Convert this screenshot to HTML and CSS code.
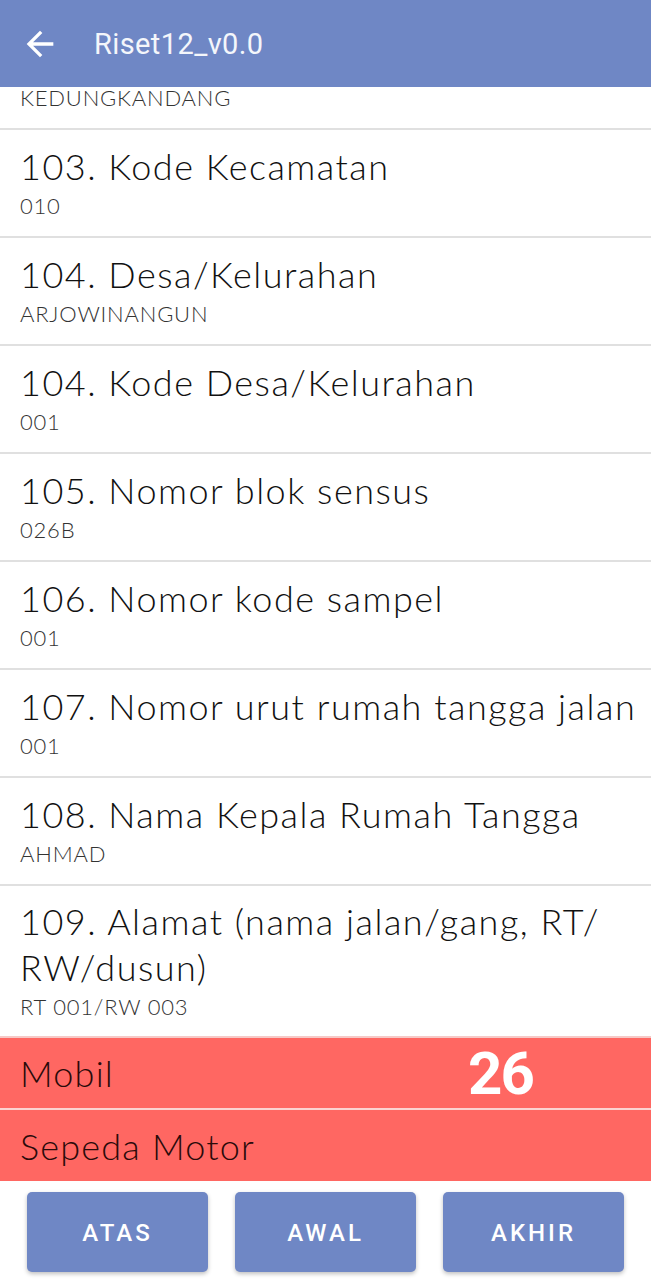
FILE: index.html
```html
<!DOCTYPE html>
<html>
<head>
<meta charset="utf-8">
<link rel="stylesheet" href="styles.css">
</head>
<body>
<div class="app">
  <header class="bar">
    <svg class="back" viewBox="0 0 24 24" width="40" height="40"><path d="M20 11H7.83l5.59-5.59L12 4l-8 8 8 8 1.41-1.41L7.83 13H20v-2z" fill="#fff"/></svg>
    <div class="title">Riset12_v0.0</div>
  </header>
  <div class="list">
    <div class="item partial"><div class="sub">KEDUNGKANDANG</div></div>
    <div class="item"><div class="q">103. Kode Kecamatan</div><div class="sub">010</div></div>
    <div class="item"><div class="q">104. Desa/Kelurahan</div><div class="sub">ARJOWINANGUN</div></div>
    <div class="item"><div class="q">104. Kode Desa/Kelurahan</div><div class="sub">001</div></div>
    <div class="item"><div class="q">105. Nomor blok sensus</div><div class="sub">026B</div></div>
    <div class="item"><div class="q">106. Nomor kode sampel</div><div class="sub">001</div></div>
    <div class="item"><div class="q">107. Nomor urut rumah tangga jalan</div><div class="sub">001</div></div>
    <div class="item"><div class="q">108. Nama Kepala Rumah Tangga</div><div class="sub">AHMAD</div></div>
    <div class="item last"><div class="q">109. Alamat (nama jalan/gang, RT/<br>RW/dusun)</div><div class="sub">RT 001/RW 003</div></div>
    <div class="red"><span>Mobil</span><span class="count">26</span></div>
    <div class="red second"><span>Sepeda Motor</span></div>
  </div>
  <footer class="nav">
    <button class="btn">ATAS</button>
    <button class="btn">AWAL</button>
    <button class="btn">AKHIR</button>
  </footer>
</div>
</body>
</html>
```
FILE: styles.css
```css
* { box-sizing: border-box; }
html, body { margin: 0; padding: 0; background: #fff; }
.app { width: 651px; height: 1280px; display: flex; flex-direction: column; overflow: hidden; font-family: "Lato", "Roboto", sans-serif; }
.bar { height: 87px; background: #6f87c5; display: flex; align-items: center; padding-left: 20px; flex-shrink: 0; }
.back { display: block; }
.title { font-family: "Roboto", sans-serif; color: #f4f6fb; font-size: 29px; margin-left: 34px; letter-spacing: 0.4px; }
.list { flex: 1; display: flex; flex-direction: column; }
.item { padding: 13px 20px 13px; border-bottom: 2px solid #e0e0e0; }
.item.partial { padding-top: 0; height: 43px; display: flex; align-items: flex-end; padding-bottom: 13px; }
.item.partial .sub { line-height: 22px; margin-bottom: 6px; }
.item.last { border-bottom: 2px solid #f6c9c7; padding-top: 12px; padding-bottom: 12px; }
.q { font-size: 36px; font-weight: 300; color: #111; line-height: 46px; white-space: nowrap; letter-spacing: 1.5px; }
.sub { font-size: 22px; font-weight: 300; color: #333; line-height: 34px; letter-spacing: 0.8px; }
.red { background: #ff6762; height: 70px; display: flex; align-items: center; padding-left: 20px; font-size: 36px; font-weight: 300; letter-spacing: 1.2px; color: #2a0a0a; position: relative; }
.red.second { border-top: 2px solid #fbd3d1; height: 73px; }
.count { position: absolute; left: 468px; top: 6px; font-family: "Roboto", sans-serif; font-weight: 700; font-size: 60px; color: #fff; letter-spacing: -2px; line-height: 60px; }
.nav { height: 100px; display: flex; gap: 27px; padding: 11px 27px 9px; flex-shrink: 0; }
.btn { flex: 1; border: none; border-radius: 5px; background: #6f87c5; color: #fff; font-family: "Roboto", sans-serif; font-weight: 500; font-size: 24px; letter-spacing: 3px; padding-top: 3px; box-shadow: 0 2px 4px rgba(0,0,0,0.25); }
```
